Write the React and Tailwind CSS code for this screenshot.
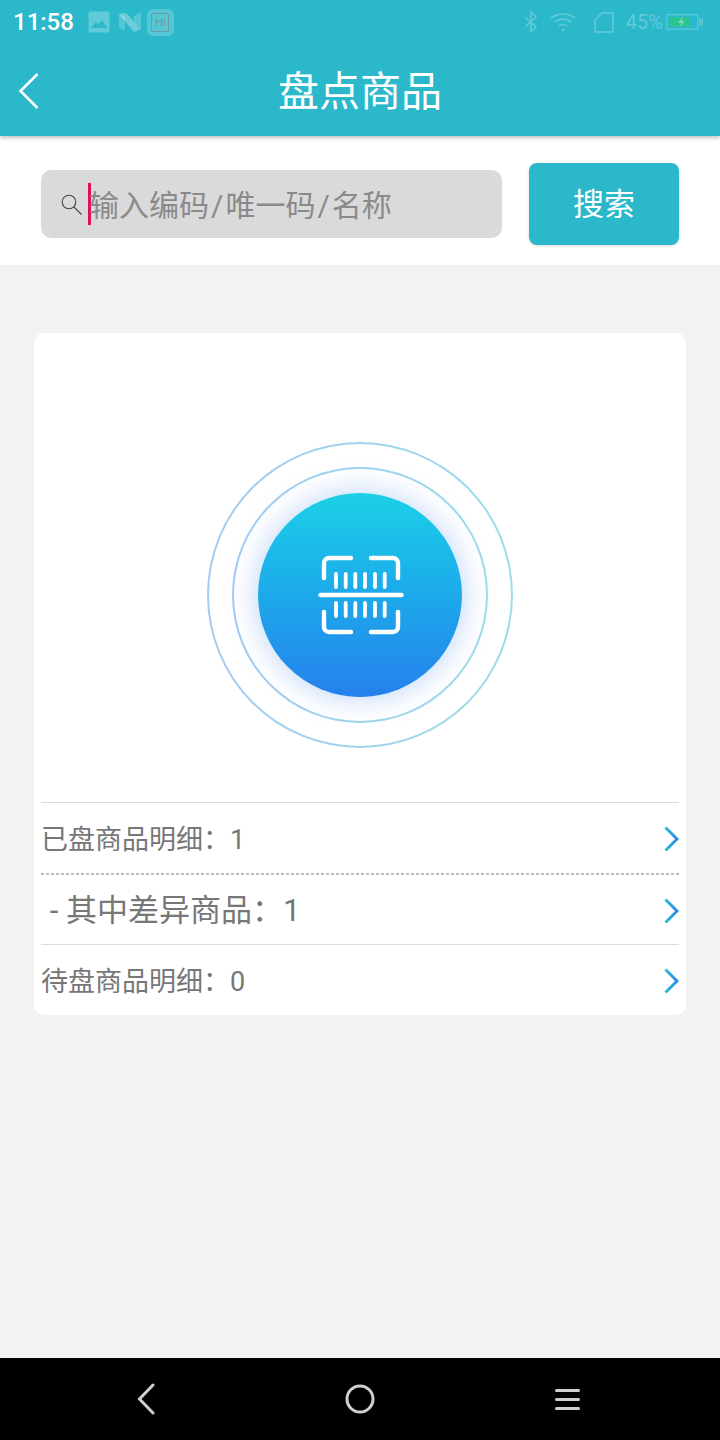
import { useId } from "react";

const FONT = "font-['Roboto','Noto_Sans_CJK_SC',sans-serif]";

const ROWS = [
  { label: "已盘商品明细：1", size: "text-[27px]", line: "solid" },
  { label: " - 其中差异商品：1", size: "text-[31px] pl-px", line: "dotted" },
  { label: "待盘商品明细：0", size: "text-[27px]", line: "solid" },
];

function Chevron() {
  const id = useId();
  return (
    <svg width="15" height="26" viewBox="0 0 15 26" fill="none">
      <defs>
        <linearGradient id={id} gradientUnits="userSpaceOnUse" x1="1" y1="0" x2="14" y2="0">
          <stop offset="0" stopColor="#2bbdd0" />
          <stop offset="1" stopColor="#2a86ec" />
        </linearGradient>
      </defs>
      <path d="M1.5 1.5 L13 13 L1.5 24.5" stroke={`url(#${id})`} strokeWidth="3" />
    </svg>
  );
}

function ScanIcon() {
  return (
    <svg width="90" height="90" viewBox="0 0 90 90" fill="none" stroke="#fff" strokeLinecap="round">
      <g strokeWidth="4.4">
        <path d="M36 8 H14 a5 5 0 0 0 -5 5 V28" />
        <path d="M56 8 H78 a5 5 0 0 1 5 5 V28" />
        <path d="M9 62 V77 a5 5 0 0 0 5 5 H36" />
        <path d="M83 62 V77 a5 5 0 0 1 -5 5 H56" />
        <path d="M5.5 45 H86.5" />
      </g>
      <g strokeWidth="3.8">
        {[21, 30.7, 40.3, 50, 60, 69.7].map((x) => (
          <path key={x} d={`M${x} 24 V37 M${x} 53 V66`} />
        ))}
      </g>
    </svg>
  );
}

function StatusBar() {
  return (
    <div className="flex h-[44px] items-center pl-[13px]">
      <span className="text-[24px] font-medium leading-none text-white font-['Roboto',sans-serif]">11:58</span>

      {/* picture */}
      <svg className="ml-[14px]" width="22" height="22" viewBox="0 0 22 22">
        <rect width="21" height="21" x="0.5" y="0.5" rx="2" fill="#fff" fillOpacity="0.25" />
        <path d="M3 17 L8 11 L10.5 14 L14 9 L19 17Z" fill="#2bb8cb" />
      </svg>
      <svg className="ml-[8px]" width="24" height="22" viewBox="0 0 24 22" fill="#fff">
        <path d="M1 3 L8 2 L23 18 L16 21Z" fillOpacity="0.3" />
        <path d="M1 3 L7 6 L7 19 L1 17Z" fillOpacity="0.2" />
        <path d="M16 5 L23 1 L23 18 L16 11Z" fillOpacity="0.2" />
      </svg>
      <div className="ml-[5px] flex h-[27px] w-[27px] items-center justify-center rounded-[6px] bg-white/20">
        <div className="flex h-[19px] w-[18px] items-center justify-center rounded-[2px] border border-[#6f9a9f] text-[11px] leading-none text-[#6f9a9f]">
          Hi
        </div>
      </div>

      {/* right side, dimmed */}
      <div className="ml-auto flex items-center pr-[17px]">
        <svg className="opacity-25" width="14" height="22" viewBox="0 0 14 22" fill="none" stroke="#fff" strokeWidth="1.6">
          <path d="M1 6 L12 16 L7 21 V1 L12 6 L1 16" />
        </svg>
        <svg className="ml-[12px] opacity-25" width="26" height="20" viewBox="0 0 26 20" fill="none" stroke="#fff" strokeWidth="1.6">
          <path d="M1 6 Q13 -2 25 6" />
          <path d="M5 10 Q13 4 21 10" />
          <path d="M9 14 Q13 11 17 14" />
          <circle cx="13" cy="18" r="1.4" fill="#fff" stroke="none" />
        </svg>
        <svg className="ml-[18px] opacity-25" width="20" height="21" viewBox="0 0 20 21" fill="none" stroke="#fff" strokeWidth="1.6">
          <path d="M8 1 H19 V20 H1 V8Z" />
        </svg>
        <span className="ml-[12px] text-[20px] leading-none text-white opacity-25 font-['Roboto',sans-serif]">45%</span>
        <svg className="ml-[3px]" width="37" height="18" viewBox="0 0 37 18">
          <rect x="0.75" y="1.75" width="31" height="14.5" fill="none" stroke="#fff" strokeOpacity="0.2" strokeWidth="1.5" />
          <rect x="33" y="5.5" width="4" height="7" fill="#fff" fillOpacity="0.2" />
          <rect x="4" y="4.5" width="20" height="9" fill="#2bc48a" />
          <path d="M17 3 L12 10 H15.5 L13 15 L19 8 H15.5Z" fill="#7fd6c4" />
        </svg>
      </div>
    </div>
  );
}

export default function App() {
  return (
    <div className={`flex h-[1440px] w-[720px] flex-col bg-[#f2f2f2] ${FONT}`}>
      <header className="relative z-10 h-[136px] bg-[#2bb8cb] shadow-[0_2px_4px_rgba(0,0,0,0.25)]">
        <StatusBar />
        <div className="relative flex h-[92px] items-center justify-center">
          <svg className="absolute left-[18px] top-[28px]" width="22" height="38" viewBox="0 0 22 38" fill="none" stroke="#fff" strokeWidth="2.6">
            <path d="M19.5 2 L2.5 19 L19.5 36" />
          </svg>
          <h1 className="pt-[4px] text-[41px] font-normal leading-none text-white">盘点商品</h1>
        </div>
      </header>

      <div className="flex h-[129px] items-center justify-between bg-white pb-[20px] pl-[41px] pr-[41px] pt-[27px]">
        <div className="flex h-[68px] w-[461px] items-center rounded-[10px] bg-[#dadada] pl-[20px]">
          <svg width="21" height="23" viewBox="0 0 21 23" fill="none" stroke="#444" strokeWidth="1.1">
            <circle cx="8" cy="9" r="6.8" />
            <path d="M13 14 L20.5 21.5" />
          </svg>
          <span className="ml-[6px] h-[42px] w-[3px] shrink-0 bg-[#e0105f]" />
          <span className="ml-[-2px] whitespace-nowrap pt-[4px] text-[30px] leading-none text-[#8a8a8a]">
            输入编码<span className="mx-[2px]">/</span>唯一码<span className="mx-[2px]">/</span>名称
          </span>
        </div>
        <button className="flex h-[82px] w-[150px] items-center justify-center rounded-[8px] bg-[#2bb8cb] pt-[2px] text-[31px] text-white shadow-[0_1px_3px_rgba(0,0,0,0.15)]">
          搜索
        </button>
      </div>

      <main className="flex-1 px-[34px] pt-[68px]">
        <div className="rounded-[10px] bg-white px-[7px] pt-[109px]">
          <div className="flex justify-center pb-[54px]">
            <div className="flex h-[306px] w-[306px] items-center justify-center rounded-full bg-gradient-to-r from-[#a3cbf1] to-[#9cdde8] p-[2px]">
              <div className="flex h-full w-full items-center justify-center rounded-full bg-white">
                <div className="flex h-[256px] w-[256px] items-center justify-center rounded-full bg-gradient-to-r from-[#a3cbf1] to-[#9cdde8] p-[2px]">
                  <div className="flex h-full w-full items-center justify-center rounded-full bg-white">
                    <div className="flex h-[204px] w-[204px] items-center justify-center rounded-full bg-gradient-to-b from-[#1dd0e6] to-[#2680ec] shadow-[0_0_30px_rgba(80,140,235,0.4)]">
                      <ScanIcon />
                    </div>
                  </div>
                </div>
              </div>
            </div>
          </div>

          {ROWS.map((row) => (
            <div key={row.label}>
              {row.line === "solid" ? (
                <div className="h-px bg-[#dcdcdc]" />
              ) : (
                <div className="h-[2px] bg-[repeating-linear-gradient(90deg,#bbbbbb_0,#bbbbbb_3px,transparent_3px,transparent_5px)]" />
              )}
              <div className={`flex items-center justify-between pt-[2px] text-[#777] ${row.line === "solid" ? "h-[70px]" : "h-[69px]"}`}>
                <span className={`whitespace-pre pt-[2px] ${row.size}`}>{row.label}</span>
                <Chevron />
              </div>
            </div>
          ))}
        </div>
      </main>

      <nav className="flex h-[82px] items-center bg-black pl-[137px] text-[#cfcfcf]">
        <svg width="18" height="32" viewBox="0 0 18 32" fill="none" stroke="currentColor" strokeWidth="3" strokeLinecap="round">
          <path d="M16 2 L2.5 16 L16 30" />
        </svg>
        <svg className="ml-[190px]" width="30" height="30" viewBox="0 0 30 30" fill="none" stroke="currentColor" strokeWidth="3">
          <circle cx="15" cy="15" r="13" />
        </svg>
        <div className="ml-[180px] flex w-[25px] flex-col gap-[6px]">
          <span className="h-[3px] rounded-full bg-current" />
          <span className="h-[3px] rounded-full bg-current" />
          <span className="h-[3px] rounded-full bg-current" />
        </div>
      </nav>
    </div>
  );
}
